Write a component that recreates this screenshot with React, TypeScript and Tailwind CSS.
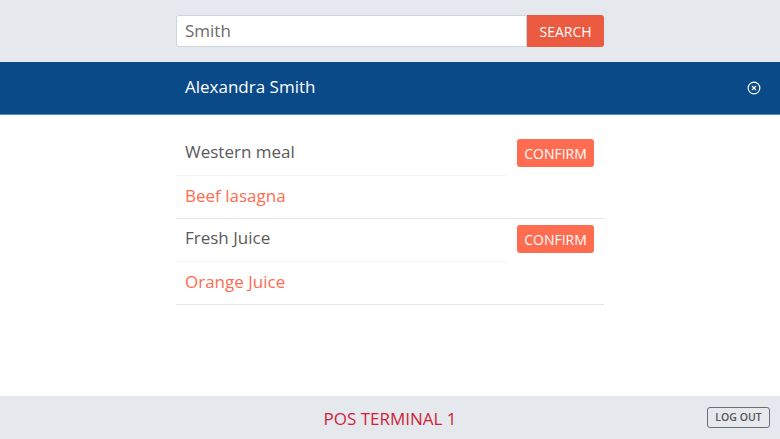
import React from "react";

function CloseIcon() {
  return (
    <svg width="14" height="14" viewBox="0 0 24 24" fill="none" stroke="white" strokeWidth="2" strokeLinecap="round" strokeLinejoin="round">
      <circle cx="12" cy="12" r="10" />
      <path d="m15 9-6 6" />
      <path d="m9 9 6 6" />
    </svg>
  );
}

const items = [
  { title: "Western meal", sub: "Beef lasagna" },
  { title: "Fresh Juice", sub: "Orange Juice" },
];

export default function App() {
  return (
    <div
      className="w-full h-[439px] flex flex-col bg-white overflow-hidden"
      style={{ fontFamily: '"Open Sans", "Noto Sans", sans-serif' }}
    >
      <div className="h-[62px] bg-[#e5e8ec] flex justify-center pt-[15px]">
        <div className="w-[428px] h-[32px] flex">
          <input
            readOnly
            value="Smith"
            className="w-[351px] h-full bg-white border border-[#cfd4da] rounded-l-[3px] pl-[8px] pb-[1px] text-[17px] text-[#6a6a6a] outline-none"
          />
          <button className="w-[77px] h-full bg-[#eb5b41] text-white text-[14px] rounded-r-[3px] flex items-center justify-center">
            SEARCH
          </button>
        </div>
      </div>

      <div className="h-[53px] bg-[#0b4a89] border-b border-[#4d8fd4] grid grid-cols-[1fr_428px_1fr] items-center">
        <div />
        <div className="pl-[9px] pb-[2px] text-white text-[17px]">Alexandra Smith</div>
        <div className="flex justify-end pr-[19px]">
          <CloseIcon />
        </div>
      </div>

      <div className="flex-1 flex justify-center pt-[18px]">
        <div className="w-[428px] flex flex-col">
          {items.map((it) => (
            <div key={it.title} className="flex border-b border-[#e4e4e4]">
              <div className="w-[331px] flex flex-col">
                <div className="h-[43px] flex items-center pl-[9px] pb-[5px] text-[17px] text-[#5a5a5a] border-b border-[#f3f3f3]">
                  {it.title}
                </div>
                <div className="h-[42px] flex items-center pl-[9px] pb-[3px] text-[17px] text-[#ff6b4f]">
                  {it.sub}
                </div>
              </div>
              <div className="flex-1 flex justify-center pt-[6px]">
                <button className="w-[77px] h-[28px] bg-[#ff6c50] text-white text-[14px] rounded-[3px] flex items-center justify-center">
                  CONFIRM
                </button>
              </div>
            </div>
          ))}
        </div>
      </div>

      <div className="h-[43px] bg-[#e5e8ec] grid grid-cols-[1fr_auto_1fr] items-center">
        <div />
        <div className="text-[17px] text-[#cf1f3a] pt-[2px]">POS TERMINAL 1</div>
        <div className="flex justify-end pr-[10px]">
          <button className="w-[63px] h-[21px] border border-[#6b7078] rounded-[3px] text-[10.5px] font-semibold text-[#555] flex items-center justify-center">
            LOG OUT
          </button>
        </div>
      </div>
    </div>
  );
}
